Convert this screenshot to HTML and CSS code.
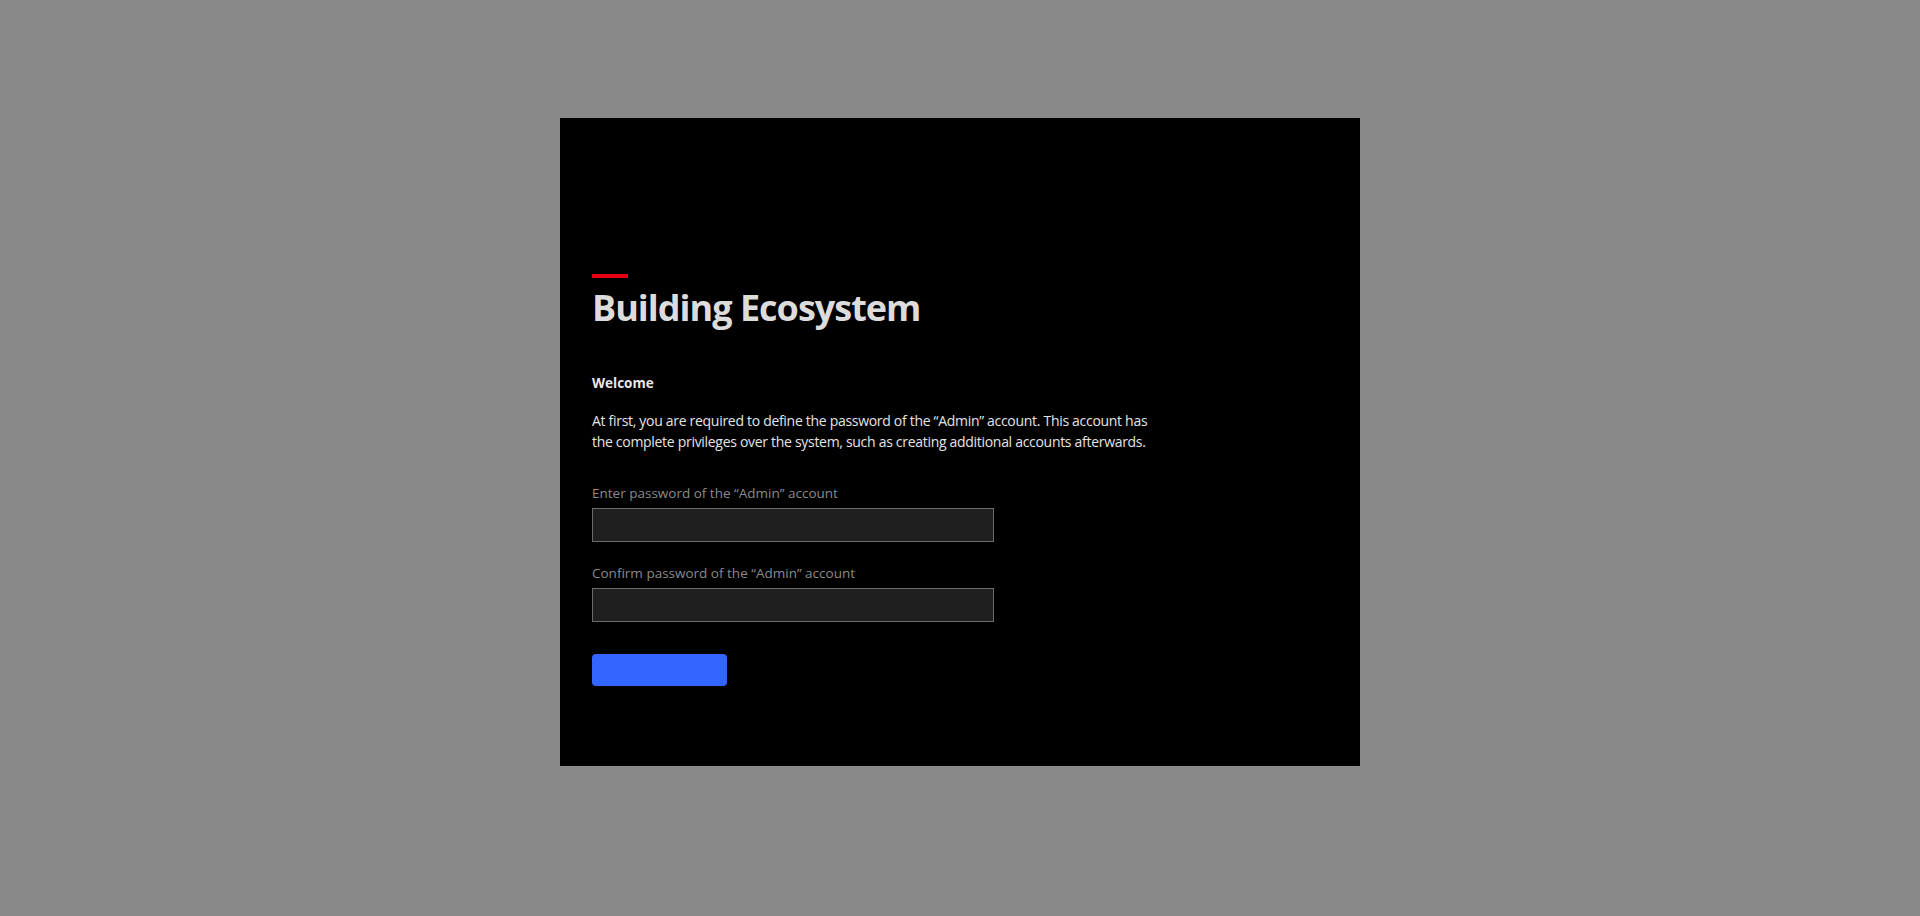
FILE: index.html
```html
<!DOCTYPE html>
<html lang="en">
<head>
<meta charset="utf-8">
<title>Building Ecosystem</title>
<link rel="stylesheet" href="styles.css">
</head>
<body>
  <main class="card">
    <div class="accent"></div>
    <h1 class="title">Building Ecosystem</h1>
    <h2 class="welcome">Welcome</h2>
    <p class="intro">At first, you are required to define the password of the “Admin” account. This account has the complete privileges over the system, such as creating additional accounts afterwards.</p>
    <form class="form">
      <label class="field">
        <span class="label">Enter password of the “Admin” account</span>
        <input class="input" type="password">
      </label>
      <label class="field">
        <span class="label">Confirm password of the “Admin” account</span>
        <input class="input" type="password">
      </label>
      <button class="submit" type="button"></button>
    </form>
  </main>
</body>
</html>
```
FILE: styles.css
```css
html, body {
  margin: 0;
  padding: 0;
}
body {
  background: #898989;
  height: 916px;
  overflow: hidden;
  font-family: "Open Sans", "Noto Sans", sans-serif;
}
.card {
  box-sizing: border-box;
  width: 800px;
  height: 648px;
  margin: 118px auto 0;
  background: #000;
  padding: 156px 32px 0;
}
.accent {
  width: 36px;
  height: 4px;
  background: #e60012;
}
.title {
  margin: 8px 0 0;
  font-size: 36px;
  line-height: 44px;
  font-weight: 700;
  letter-spacing: -1px;
  color: #dcdcdc;
}
.welcome {
  margin: 43px 0 0;
  font-size: 13.5px;
  line-height: 20px;
  font-weight: 700;
  color: #e8e8e8;
}
.intro {
  margin: 17px 0 0;
  max-width: 566px;
  font-size: 14px;
  line-height: 21px;
  letter-spacing: -0.3px;
  color: #e4e4e4;
}
.form {
  display: flex;
  flex-direction: column;
  align-items: flex-start;
  margin-top: 32px;
}
.field {
  display: flex;
  flex-direction: column;
  gap: 6px;
  margin-bottom: 22px;
}
.label {
  font-size: 13.5px;
  line-height: 18px;
  color: #8a8a8a;
}
.input {
  box-sizing: border-box;
  width: 402px;
  height: 34px;
  margin: 0;
  background: #1f1f1f;
  border: 1px solid #6b6b6b;
  outline: none;
  color: #e0e0e0;
}
.submit {
  margin-top: 10px;
  width: 135px;
  height: 32px;
  border: 0;
  border-radius: 4px;
  background: #3366ff;
}
```
